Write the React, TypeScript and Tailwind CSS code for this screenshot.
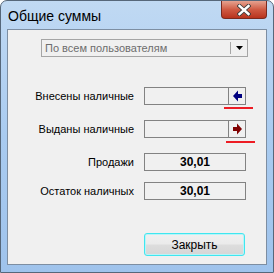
import React from 'react';

const font = { fontFamily: '"Liberation Sans", Arial, sans-serif' };

type RowProps = {
    label: string;
    value?: string;
    arrow?: 'left' | 'right';
    className?: string;
};

const LeftArrow = () => (
    <svg width="9" height="12" viewBox="0 0 9 12">
        <polygon points="0,6 5,0.5 5,4 9,4 9,8 5,8 5,11.5" fill="#000080" />
    </svg>
);

const RightArrow = () => (
    <svg width="9" height="12" viewBox="0 0 9 12">
        <polygon points="9,6 4,0.5 4,4 0,4 0,8 4,8 4,11.5" fill="#800000" />
    </svg>
);

const Row = ({ label, value, arrow, className = '' }: RowProps) => {
    return (
        <div className={`relative flex items-center ${className}`}>
            <div className="w-[126px] text-right text-[11px] text-black leading-none">{label}</div>
            <div className="ml-[10px] flex h-[18px] w-[102px] border border-[#828282] bg-[#f0f0f0]">
                {arrow ? (
                    <>
                        <div className="flex-1" />
                        <div className="flex w-[17px] items-center justify-center border-l border-[#828282]">
                            {arrow === 'left' ? <LeftArrow /> : <RightArrow />}
                        </div>
                    </>
                ) : (
                    <div className="flex flex-1 items-center justify-center text-[12px] font-bold leading-none text-black">
                        {value}
                    </div>
                )}
            </div>
            {arrow === 'left' && (
                <div className="absolute left-[216px] top-[20px] h-[2px] w-[29px] bg-[#ed1c24]" />
            )}
            {arrow === 'right' && (
                <div className="absolute left-[218px] top-[21px] h-[2px] w-[29px] bg-[#ed1c24]" />
            )}
        </div>
    );
};

export default function App() {
    return (
        <div
            style={font}
            className="flex h-[273px] w-[274px] flex-col overflow-hidden rounded-t-[7px] border border-[#56677a] bg-gradient-to-b from-[#c0d9f3] via-[#a9cbf0] to-[#9fc3ec]"
        >
            {/* Title bar */}
            <div className="flex h-[28px] items-start">
                <div className="pl-[7px] pt-[8px] text-[14px] leading-none text-black">Общие суммы</div>
                <div className="ml-auto mr-[6px] flex h-[18px] w-[46px] items-center justify-center rounded-b-[4px] border border-t-0 border-[#7a2a1f] bg-gradient-to-b from-[#e5a290] via-[#cf5a43] to-[#b8321c]">
                    <svg width="14" height="12" viewBox="0 0 14 12">
                        <path d="M2.5 2 L11.5 10 M11.5 2 L2.5 10" stroke="#3c3c3c" strokeWidth="4.2" strokeLinecap="square" />
                        <path d="M2.5 2 L11.5 10 M11.5 2 L2.5 10" stroke="#ffffff" strokeWidth="2.4" strokeLinecap="square" />
                    </svg>
                </div>
            </div>

            {/* Client area */}
            <div className="mx-[6px] mb-[7px] flex flex-1 flex-col border border-[#7d8ea2] bg-[#f0f0f0]">
                <div className="ml-[33px] mt-[9px] flex h-[18px] w-[207px] border border-[#a5a5a5] bg-[#f0f0f0]">
                    <div className="flex flex-1 items-center pl-[3px] text-[11px] leading-none text-[#6d6d6d]">
                        По всем пользователям
                    </div>
                    <div className="my-[2px] flex w-[17px] items-center justify-center border-l border-[#a5a5a5]">
                        <svg width="7" height="4" viewBox="0 0 7 4">
                            <polygon points="0,0 7,0 3.5,4" fill="#000" />
                        </svg>
                    </div>
                </div>

                <Row className="mt-[30px]" label="Внесены наличные" arrow="left" />
                <Row className="mt-[15px]" label="Выданы наличные" arrow="right" />
                <Row className="mt-[15px]" label="Продажи" value="30,01" />
                <Row className="mt-[11px]" label="Остаток наличных" value="30,01" />

                <button className="ml-[136px] mt-[33px] h-[23px] w-[101px] rounded-[3px] border border-[#3fe6ef] bg-[linear-gradient(#f0f0f0_0%,#ebebeb_48%,#dddddd_52%,#d6d6d6_100%)] text-[12px] leading-none text-black shadow-[inset_0_0_0_1px_#b8f4f8]">
                    Закрыть
                </button>
            </div>
        </div>
    );
}
